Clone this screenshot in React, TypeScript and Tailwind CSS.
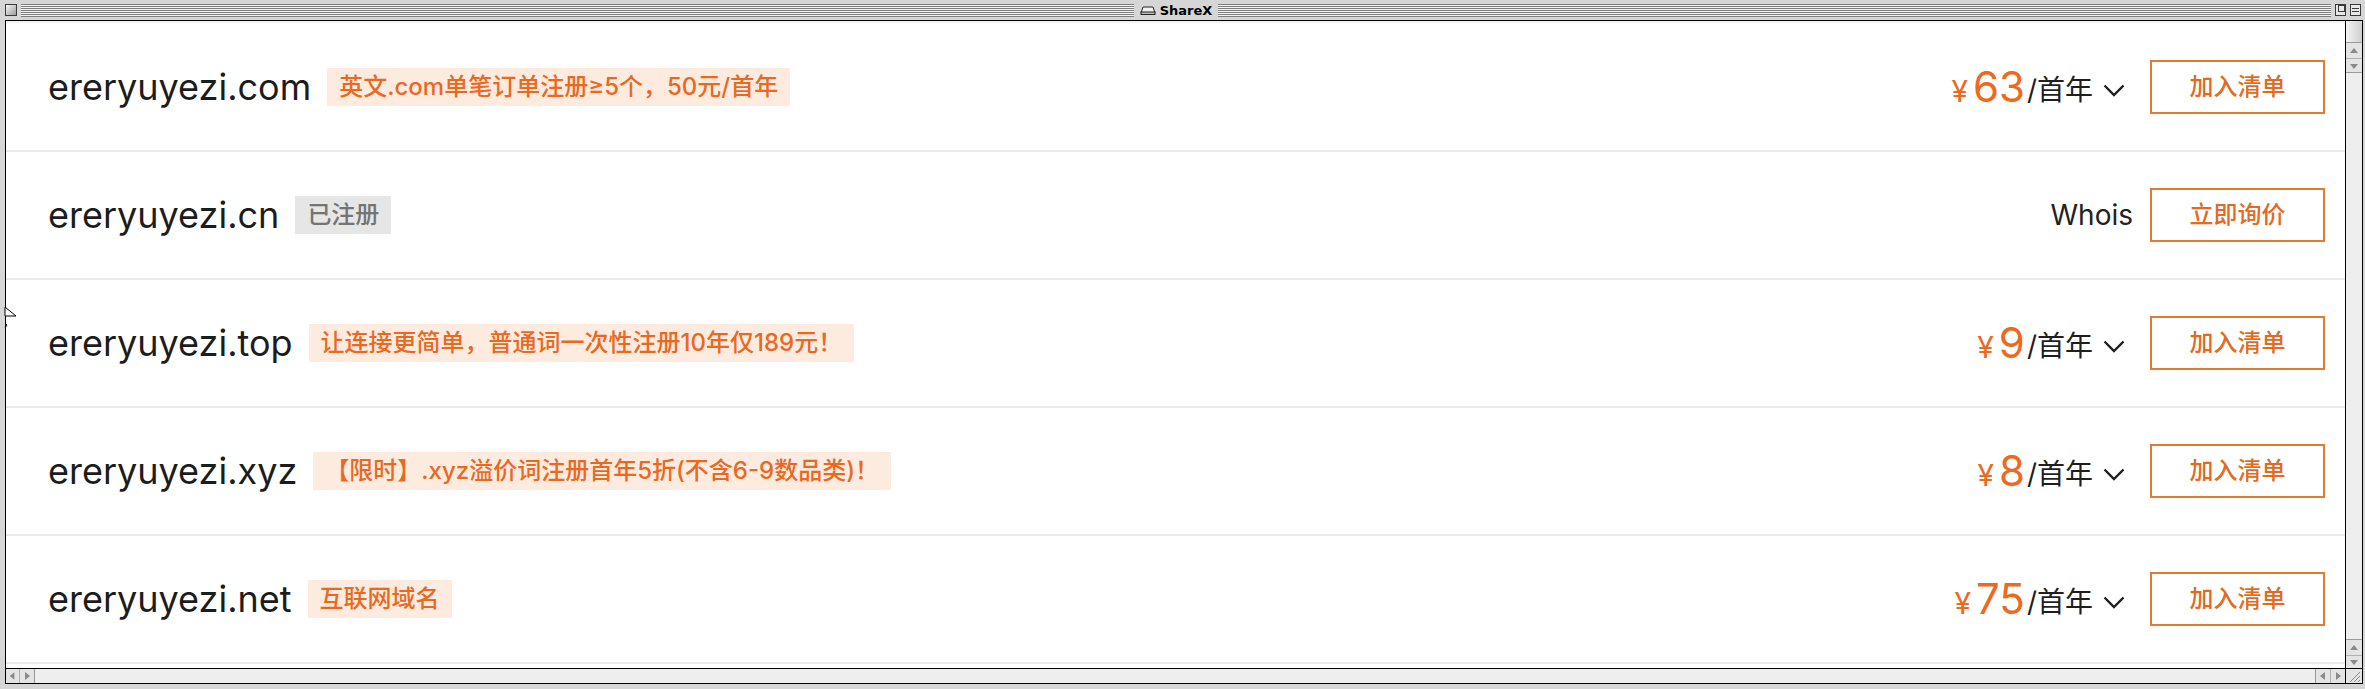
import React from 'react';

type Row = {
  domain: string;
  tag: string;
  taken?: boolean;
  price?: string;
};

const rows: Row[] = [
  { domain: 'ereryuyezi.com', tag: '英文.com单笔订单注册≥5个，50元/首年', price: '63' },
  { domain: 'ereryuyezi.cn', tag: '已注册', taken: true },
  { domain: 'ereryuyezi.top', tag: '让连接更简单，普通词一次性注册10年仅189元！', price: '9' },
  { domain: 'ereryuyezi.xyz', tag: '【限时】.xyz溢价词注册首年5折(不含6-9数品类)！', price: '8' },
  { domain: 'ereryuyezi.net', tag: '互联网域名', price: '75' },
];

const stripes =
  'bg-[repeating-linear-gradient(to_bottom,#7f7f7f_0px,#7f7f7f_1px,#f2f2f2_1px,#f2f2f2_2px)]';

function Chevron() {
  return (
    <svg width="22" height="13" viewBox="0 0 22 13" fill="none">
      <path d="M1.5 1.5 L11 11 L20.5 1.5" stroke="#1f1f1f" strokeWidth="2.4" />
    </svg>
  );
}

function Arrow({ dir, className }: { dir: 'up' | 'down' | 'left' | 'right'; className: string }) {
  const pts = {
    up: '3,9 11,9 7,4',
    down: '3,5 11,5 7,10',
    left: '9,3 9,11 4,7',
    right: '5,3 5,11 10,7',
  }[dir];
  return (
    <div className={`flex items-center justify-center bg-[#e4e4e4] ${className}`}>
      <svg width="14" height="14" viewBox="0 0 14 14">
        <polygon points={pts} fill="#8a8a8a" />
      </svg>
    </div>
  );
}

function DomainRow({ row }: { row: Row }) {
  return (
    <div className="flex h-[128px] items-center border-b-2 border-[#ebebeb] pl-[42px] pr-[20px]">
      <div className="flex flex-1 items-center gap-[16px]">
        <span className="text-[36px] leading-none text-[#1c1c1c] [font-family:Inter,'Noto_Sans_CJK_SC',sans-serif]">
          {row.domain}
        </span>
        <span
          className={`px-[12px] py-[7px] text-[24px] font-medium leading-[24px] [font-family:Inter,'Noto_Sans_CJK_SC',sans-serif] ${
            row.taken ? 'bg-[#e6e6e6] text-[#747474]' : 'bg-[#fdebdf] text-[#e8691f]'
          }`}
        >
          {row.tag}
        </span>
      </div>
      <div className="flex items-center [font-family:Inter,'Noto_Sans_CJK_SC',sans-serif]">
        {row.taken ? (
          <span className="mr-[17px] text-[28px] text-[#222]">Whois</span>
        ) : (
          <div className="mr-[25px] flex items-center">
            <span className="mr-[5px] mt-[8px] text-[30px] leading-none text-[#ec6a1e]">¥</span>
            <span className="text-[42px] leading-none text-[#ec6a1e]">{row.price}</span>
            <span className="ml-[2px] mt-[6px] text-[28px] leading-none text-[#1f1f1f]">/首年</span>
            <span className="ml-[10px] mt-[6px]">
              <Chevron />
            </span>
          </div>
        )}
        <button className="flex h-[54px] w-[175px] items-center justify-center border-2 border-[#e27a30] text-[24px] font-medium text-[#e26a22]">
          {row.taken ? '立即询价' : '加入清单'}
        </button>
      </div>
    </div>
  );
}

export default function App() {
  return (
    <div className="relative flex h-[689px] w-[2365px] flex-col overflow-hidden bg-[#d6d6d6] pb-[5px] pl-[5px] pr-[2px]">
      {/* title bar */}
      <div className="flex h-[20px] items-center">
        <div className="h-[12px] w-[12px] border border-[#3a3a3a] bg-[linear-gradient(135deg,#f8f8f8,#9a9a9a)]" />
        <div className={`ml-[4px] h-[13px] flex-1 ${stripes}`} />
        <div className="flex items-center gap-[4px] px-[6px]">
          <svg width="16" height="10" viewBox="0 0 16 10">
            <path d="M1 8 L3 2 H13 L15 8 Z" fill="#f0f0f0" stroke="#222" strokeWidth="1" />
            <rect x="1" y="7" width="14" height="2.5" fill="#bdbdbd" stroke="#222" strokeWidth="1" />
          </svg>
          <span className="text-[13px] font-bold leading-none text-black [font-family:'DejaVu_Sans',sans-serif]">
            ShareX
          </span>
        </div>
        <div className={`h-[13px] flex-1 ${stripes}`} />
        <div className="ml-[4px] flex h-[12px] w-[11px] items-start justify-end border border-[#3a3a3a] bg-[#e8e8e8]">
          <div className="h-[7px] w-[7px] border border-[#3a3a3a]" />
        </div>
        <div className="ml-[4px] mr-[2px] flex h-[12px] w-[11px] flex-col justify-center gap-[2px] border border-[#3a3a3a] bg-[#e8e8e8] px-[1px]">
          <div className="h-px bg-[#3a3a3a]" />
          <div className="h-px bg-[#3a3a3a]" />
        </div>
      </div>

      {/* window body */}
      <div className="flex flex-1 flex-col border border-black">
        <div className="flex flex-1 overflow-hidden">
          <div className="flex-1 bg-white pt-[3px] shadow-[inset_0_2px_2px_rgba(0,0,0,0.06)]">
            {rows.map((row) => (
              <DomainRow key={row.domain} row={row} />
            ))}
          </div>
          <div className="flex w-[17px] flex-col border-l border-black bg-[#eeeeee]">
            <div className="h-[22px] border-b border-[#9a9a9a] bg-[linear-gradient(90deg,#f4f4f4,#cfcfcf)]" />
            <Arrow dir="up" className="h-[16px] border-b border-[#b0b0b0]" />
            <Arrow dir="down" className="h-[14px] border-b border-[#9a9a9a]" />
            <div className="flex-1" />
            <Arrow dir="up" className="h-[16px] border-t border-[#9a9a9a]" />
            <Arrow dir="down" className="h-[13px] border-t border-[#b0b0b0]" />
          </div>
        </div>
        <div className="flex h-[15px] border-t border-black bg-[#eeeeee]">
          <Arrow dir="left" className="w-[14px] border-r border-[#b0b0b0]" />
          <Arrow dir="right" className="w-[15px] border-r border-[#9a9a9a]" />
          <div className="flex-1" />
          <Arrow dir="left" className="w-[15px] border-l border-[#9a9a9a]" />
          <Arrow dir="right" className="w-[15px] border-l border-[#b0b0b0]" />
          <div className="flex w-[17px] items-center justify-center border-l border-black bg-[#e4e4e4]">
            <svg width="14" height="14" viewBox="0 0 14 14">
              <path d="M3 13 L13 3 M7 13 L13 7 M11 13 L13 11" stroke="#8a8a8a" strokeWidth="1" />
            </svg>
          </div>
        </div>
      </div>

      {/* mouse pointer at the left edge */}
      <svg className="absolute left-[4px] top-[306px]" width="14" height="26" viewBox="0 0 14 26">
        <path d="M1 1 L12 10 H1 Z" fill="white" stroke="black" strokeWidth="1" />
        <path d="M1 17 L3 19 L1 22" fill="none" stroke="black" strokeWidth="1" />
      </svg>
    </div>
  );
}
